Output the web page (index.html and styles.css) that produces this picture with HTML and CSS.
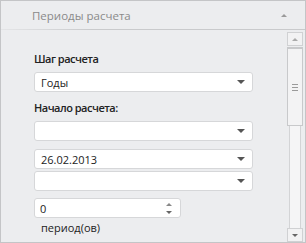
FILE: index.html
```html
<!DOCTYPE html>
<html lang="ru">
<head>
  <meta charset="UTF-8">
  <title>Периоды расчета</title>
  <link rel="stylesheet" href="styles.css">
</head>
<body>

<div class="panel">
  <div class="panel-header">
    <span class="panel-title">Периоды расчета</span>
    <span class="tri tri-up collapse"></span>
  </div>
  <div class="panel-body">
    <div class="form">
      <div class="label">Шаг расчета</div>
      <div class="select first"><span>Годы</span><i class="tri tri-down"></i></div>

      <div class="label">Начало расчета:</div>
      <div class="select first"><span></span><i class="tri tri-down"></i></div>
      <div class="select gap"><span>26.02.2013</span><i class="tri tri-down"></i></div>
      <div class="select tight"><span></span><i class="tri tri-down"></i></div>

      <div class="spinner">
        <span>0</span>
        <div class="spin-arrows">
          <i class="tri tri-up small"></i>
          <i class="tri tri-down small"></i>
        </div>
      </div>
      <div class="unit">период(ов)</div>
    </div>

    <!-- custom scrollbar -->
    <div class="scrollbar">
      <div class="sb-btn"><i class="tri tri-up small light"></i></div>
      <div class="sb-thumb">
        <div class="grip"></div>
        <div class="grip"></div>
        <div class="grip"></div>
      </div>
      <div class="sb-track"></div>
      <div class="sb-btn"><i class="tri tri-down small"></i></div>
    </div>
  </div>
</div>

</body>
</html>
```

FILE: styles.css
```css
body {
  margin: 0;
  padding: 0;
  font-family: "Open Sans", Arial, sans-serif;
  color: #222;
  background: #fff;
}
.panel {
  width: 306px;
  height: 243px;
  box-sizing: border-box;
  border: 1px solid #c4c5c7;
  background-color: #ecedef;
  display: flex;
  flex-direction: column;
}
.panel-header {
  height: 28px;
  position: relative;
  display: flex;
  align-items: center;
  padding-left: 31px;
  padding-right: 18px;
  flex-shrink: 0;
}
.panel-header::after {
  content: "";
  position: absolute;
  left: 0;
  right: 0;
  bottom: -1px;
  height: 1px;
  background: linear-gradient(to right, #e4e5e7, #c9cacc 30%, #c9cacc);
}
.panel-title {
  font-size: 11.5px;
  color: #8a8a8a;
  flex: 1;
}
.collapse {
  margin-top: 1px;
}
/* small triangles */
.tri {
  display: block;
  width: 0;
  height: 0;
  border-left: 3px solid transparent;
  border-right: 3px solid transparent;
}
.tri-up {
  border-bottom: 3px solid #9a9a9a;
}
.tri-down {
  border-top: 4px solid #555;
  border-left-width: 4px;
  border-right-width: 4px;
}
.tri-down.small {
  border-top: 3px solid #666;
  border-left-width: 3px;
  border-right-width: 3px;
}
.tri-up.small {
  border-bottom-color: #888;
}
.tri-up.light {
  border-bottom-color: #aaa;
}
.panel-body {
  flex: 1;
  display: flex;
  margin-top: 1px;
}
.form {
  flex: 1;
  padding: 21px 0 0 33px;
}
.label {
  font-size: 11px;
  font-weight: 600;
  letter-spacing: -0.5px;
  line-height: 15px;
  color: #222;
}
.select {
  width: 219px;
  height: 20px;
  box-sizing: border-box;
  background: #fff;
  border: 1px solid #d6d7d9;
  border-radius: 3px;
  display: flex;
  align-items: center;
  justify-content: space-between;
  padding: 0 7px 0 6px;
  font-size: 11px;
  color: #222;
  margin-bottom: 8px;
}
.select.first {
  margin-top: 6px;
}
.select.gap {
  margin-bottom: 2px;
}
.select.tight {
  margin-bottom: 7px;
}
.spinner {
  width: 147px;
  height: 20px;
  box-sizing: border-box;
  background: #fff;
  border: 1px solid #d6d7d9;
  border-radius: 3px;
  display: flex;
  align-items: center;
  justify-content: space-between;
  padding: 0 8px 0 5px;
  font-size: 11px;
  color: #222;
}
.spin-arrows {
  display: flex;
  flex-direction: column;
  gap: 5px;
}
.unit {
  font-size: 11px;
  line-height: 15px;
  padding: 2px 0 0 7px;
  color: #222;
}
/* scrollbar */
.scrollbar {
  width: 16px;
  margin: 2px 2px 0 0;
  display: flex;
  flex-direction: column;
}
.sb-btn {
  height: 14px;
  box-sizing: border-box;
  border: 1px solid #d0d1d3;
  background: #f2f2f3;
  display: flex;
  align-items: center;
  justify-content: center;
}
.sb-thumb {
  height: 79px;
  margin-top: 1px;
  box-sizing: border-box;
  border: 1px solid #c8c9cb;
  border-top-width: 2px;
  background: #f3f3f4;
  display: flex;
  flex-direction: column;
  align-items: center;
  justify-content: center;
  gap: 2px;
}
.grip {
  width: 6px;
  height: 1px;
  background: #9a9a9a;
}
.sb-track {
  flex: 1;
  margin: 0 2px;
  border-left: 1px solid #d3d4d6;
  border-right: 1px solid #d3d4d6;
  background: #f5f5f6;
}
```
